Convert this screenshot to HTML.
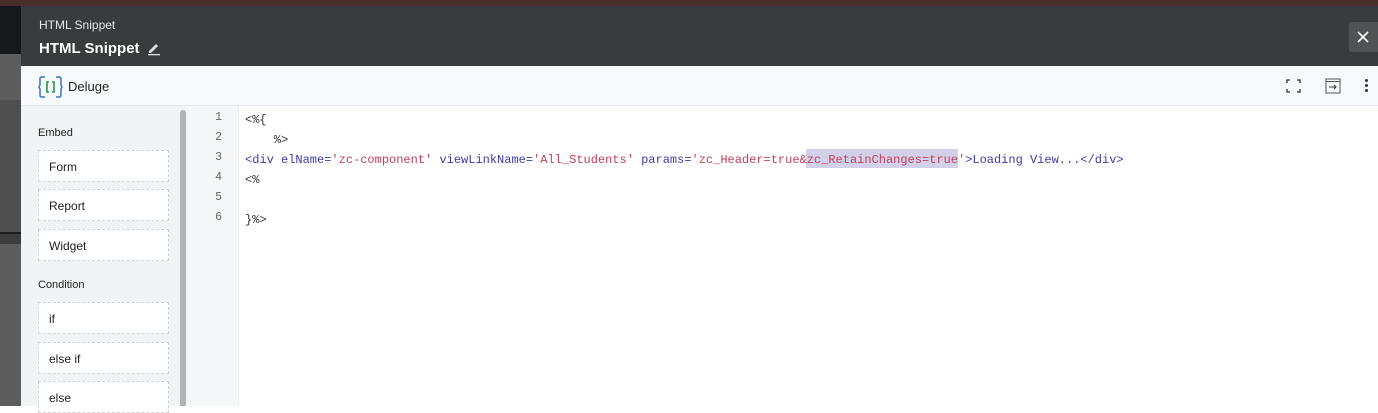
<!DOCTYPE html>
<html><head><style>
*{margin:0;padding:0;box-sizing:border-box}
body{width:1378px;height:406px;overflow:hidden;position:relative;font-family:"Liberation Sans",sans-serif;background:#fff}
.abs{position:absolute}
.code{font-family:"Liberation Mono",monospace;font-size:12px;color:#333;white-space:pre}
.btn{position:absolute;left:38px;width:131px;height:32px;background:#fff;border:1px dashed #cfd3d8;font-size:12px;color:#222;padding:9px 0 0 10px}
.lbl{position:absolute;left:38px;font-size:11px;color:#222}
.ln{position:absolute;left:188px;width:34px;text-align:right;font-family:"Liberation Mono",monospace;font-size:11.5px;color:#666}
.k{color:#3b3ba8}.s{color:#c0415a}
</style></head><body>
<div class="abs" style="left:0;top:0;width:1378px;height:6px;background:#4a2e29"></div>
<div class="abs" style="left:0;top:6px;width:21px;height:48px;background:#16181c"></div>
<div class="abs" style="left:0;top:54px;width:21px;height:352px;background:#5d5d5d"></div>
<div class="abs" style="left:0;top:100px;width:21px;height:132px;background:#4f4f4f"></div>
<div class="abs" style="left:0;top:232px;width:21px;height:2px;background:#1d1d1d"></div>
<div class="abs" style="left:0;top:234px;width:21px;height:10px;background:#3d3d3d"></div>
<div class="abs" style="left:21px;top:6px;width:1357px;height:60px;background:#3a3b3f"></div>
<div class="abs" style="left:39px;top:18px;font-size:12px;color:#e6e6e6">HTML Snippet</div>
<div class="abs" style="left:39px;top:40px;font-size:15px;font-weight:bold;color:#fff">HTML Snippet</div>
<svg class="abs" style="left:147px;top:41px" width="14" height="15" viewBox="0 0 14 15"><path d="M2 10 L9 3 L11 5 L4 12 L2 12 Z" fill="#ddd"/><rect x="1" y="13" width="12" height="1.3" fill="#ddd"/></svg>
<div class="abs" style="left:1349px;top:22px;width:29px;height:30px;background:#515256;border-radius:3px 0 0 3px"></div>
<svg class="abs" style="left:1356px;top:30px" width="14" height="14"><path d="M2 2 L12 12 M12 2 L2 12" stroke="#fff" stroke-width="1.6"/></svg>
<div class="abs" style="left:21px;top:66px;width:1357px;height:40px;background:#f8f9fd;border-bottom:1px solid #e6e8ec"></div>
<svg class="abs" style="left:38px;top:75px" width="25" height="24" viewBox="0 0 25 24"><path d="M7 2 H4 Q2 2 2 4 V10 L1 12 L2 14 V20 Q2 22 4 22 H7 M18 2 H21 Q23 2 23 4 V10 L24 12 L23 14 V20 Q23 22 21 22 H18" fill="none" stroke="#3a73c4" stroke-width="1.5"/><path d="M11 7 H9 V17 H11 M14 7 H16 V17 H14" fill="none" stroke="#1f9a4a" stroke-width="1.6"/></svg>
<div class="abs" style="left:68px;top:79px;font-size:13px;color:#222">Deluge</div>
<svg class="abs" style="left:1286px;top:79px" width="16" height="15"><path d="M1 4V1H4 M11 1H14V4 M14 10V13H11 M4 13H1V10" fill="none" stroke="#333" stroke-width="1.3"/></svg>
<svg class="abs" style="left:1325px;top:78px" width="16" height="16"><rect x="1" y="1" width="14" height="14" fill="none" stroke="#555" stroke-width="1"/><line x1="1" y1="3.5" x2="15" y2="3.5" stroke="#555"/><path d="M4 9H11 M9 7L11 9L9 11" fill="none" stroke="#333"/></svg>
<div class="abs" style="left:1365px;top:79px;width:3px;height:3px;background:#333;border-radius:50%;box-shadow:0 5px 0 #333,0 10px 0 #333"></div>
<div class="abs" style="left:21px;top:106px;width:167px;height:300px;background:#f1f4f7"></div>
<div class="abs" style="left:180px;top:110px;width:6px;height:296px;background:#b3b3b3;border-radius:3px 3px 0 0"></div>
<div class="lbl" style="top:127px">Embed</div>
<div class="btn" style="top:150px">Form</div>
<div class="btn" style="top:189px">Report</div>
<div class="btn" style="top:229px">Widget</div>
<div class="lbl" style="top:279px">Condition</div>
<div class="btn" style="top:302px">if</div>
<div class="btn" style="top:342px">else if</div>
<div class="btn" style="top:381px">else</div>
<div class="abs" style="left:188px;top:106px;width:51px;height:300px;background:#f6f7f9;border-right:1px solid #eceef1"></div>
<div class="ln" style="top:111px">1</div><div class="ln" style="top:131px">2</div><div class="ln" style="top:151px">3</div>
<div class="ln" style="top:171px">4</div><div class="ln" style="top:191px">5</div><div class="ln" style="top:211px">6</div>
<div class="abs" style="left:806px;top:149px;width:152px;height:19px;background:#d3d0ea"></div>
<div class="abs code" style="left:245px;top:110px;line-height:20px">&lt;%{
    %&gt;
<span class="k">&lt;div elName=</span><span class="s">'zc-component'</span><span class="k"> viewLinkName=</span><span class="s">'All_Students'</span><span class="k"> params=</span><span class="s">'zc_Header=true&amp;zc_RetainChanges=true'</span><span class="k">&gt;Loading View...&lt;/div&gt;</span>
&lt;%

}%&gt;</div>
</body></html>
